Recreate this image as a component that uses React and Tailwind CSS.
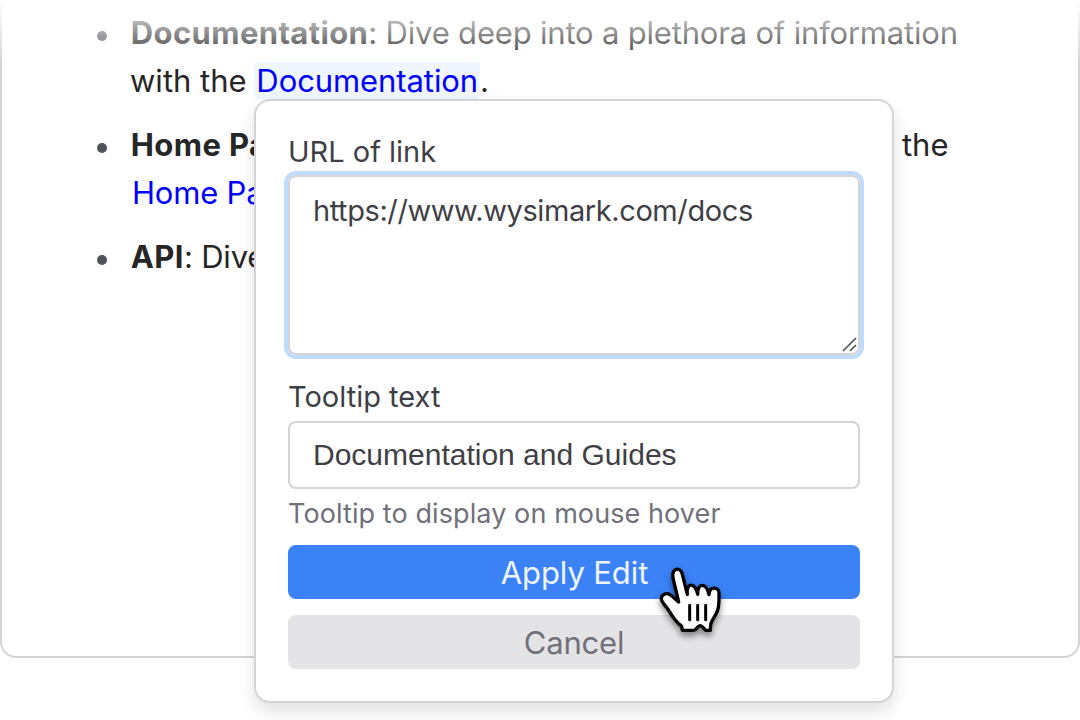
function Bullet() {
  return <span className="mt-[22px] mr-[23px] ml-[97px] h-[10px] w-[10px] shrink-0 rounded-full bg-[#52525b]" />;
}

function Strong({ children }) {
  return <b className="ml-[0.8px] font-bold tracking-[0.38px]">{children}</b>;
}

function HandCursor() {
  return (
    <svg
      className="absolute top-[560px] left-[650px] h-[80px] w-[80px] overflow-visible drop-shadow-[0_4px_3px_rgba(0,0,0,0.45)]"
      viewBox="0 0 240 240"
      fill="none"
    >
      <path
        d="M86 126 L69 54 C64 22 91 20 97 43 L112 103 C108 66 137 66 143 103 C141 67 171 67 177 104 C178 77 206 81 207 98 C207 120 209 142 200 158 C191 175 182 185 182 196 L181 211 L167 211 C161 205 157 197 150 197 C143 197 139 211 131 211 L97 211 L95 199 C80 187 67 169 58 154 C50 140 36 130 34 118 C33 103 49 97 60 104 C70 110 79 122 86 126 Z"
        fill="white"
        stroke="black"
        strokeWidth="10"
        strokeLinejoin="round"
      />
      <path d="M119 136 V179 M143 136 V179 M167 136 V179" stroke="black" strokeWidth="9" strokeLinecap="round" />
    </svg>
  );
}

export default function App() {
  return (
    <div className="relative h-[720px] w-[1080px] overflow-hidden bg-white font-['Inter',sans-serif] text-[31px] leading-[48px] whitespace-nowrap text-[#262626]">
      <div className="h-[658px] rounded-b-[16px] border-2 border-t-0 border-[#d4d4d8] pt-[9px]">
        <ul className="-ml-[2px] flex flex-col gap-4">
          <li className="flex">
            <Bullet />
            <div>
              <p><Strong>Documentation</Strong><span className="tracking-[-0.19px]">: Dive deep into a plethora of information</span></p>
              <p>
                <span>with the </span>
                <span className="-ml-[1px] rounded-[4px] bg-[#eff6ff] px-[2px] tracking-[-0.08px] text-[#0000ff]">Documentation</span>.
              </p>
            </div>
          </li>
          <li className="flex">
            <Bullet />
            <div className="w-[818.5px]">
              <p className="flex justify-between"><Strong>Home Page</Strong><span>the</span></p>
              <p className="pl-[2px] tracking-[-0.2px] text-[#0000ff]">Home Page</p>
            </div>
          </li>
          <li className="flex">
            <Bullet />
            <p><Strong>API</Strong><span className="tracking-[-0.19px]">: Dive</span></p>
          </li>
        </ul>
      </div>
      <div className="absolute inset-x-0 top-0 h-[64px] bg-linear-to-b from-white to-white/0" />

      <div className="absolute top-[99px] left-[254px] flex h-[604px] w-[640px] flex-col rounded-[16px] border-2 border-[#d4d4d8] bg-white px-8 pt-8 text-[#3f3f46] shadow-[0_8px_16px_rgba(0,0,0,0.12)]">
        <label className="h-[42px] text-[29px] leading-[38px]">URL of link</label>
        <div className="relative h-[180px] rounded-[8px] border-2 border-[#d4d4d8] px-[23px] pt-[10px] text-[29px] tracking-[-0.41px] ring-4 ring-[#bfdbfe]">
          https://www.wysimark.com/docs
          <svg className="absolute right-[1px] bottom-[1px] h-[15px] w-[15px]" viewBox="0 0 15 15" stroke="#555" strokeWidth="1.7">
            <path d="M1 14 L14 1 M8 14 L14 8" />
          </svg>
        </div>
        <label className="mt-[22px] h-[44px] text-[29px] leading-[40px]">Tooltip text</label>
        <div className="h-[68px] rounded-[8px] border-2 border-[#d4d4d8] px-[23px] font-['Liberation_Sans',sans-serif] text-[30px] leading-[64px]">
          <span>Documentation and Guides</span>
        </div>
        <p className="h-[56px] text-[27px] leading-[50px] tracking-[0.09px] text-[#71717a]">Tooltip to display on mouse hover</p>
        <button className="h-[54px] rounded-[8px] bg-[#3b82f6] pt-[2px] pl-[1px] text-[31px] leading-[52px] tracking-[-0.1px] text-[#eff6ff]">Apply Edit</button>
        <button className="mt-4 h-[54px] rounded-[8px] bg-[#e4e4e7] pt-[2px] text-[31px] leading-[52px] tracking-[-0.2px] text-[#71717a]">Cancel</button>
      </div>
      <HandCursor />
    </div>
  );
}
